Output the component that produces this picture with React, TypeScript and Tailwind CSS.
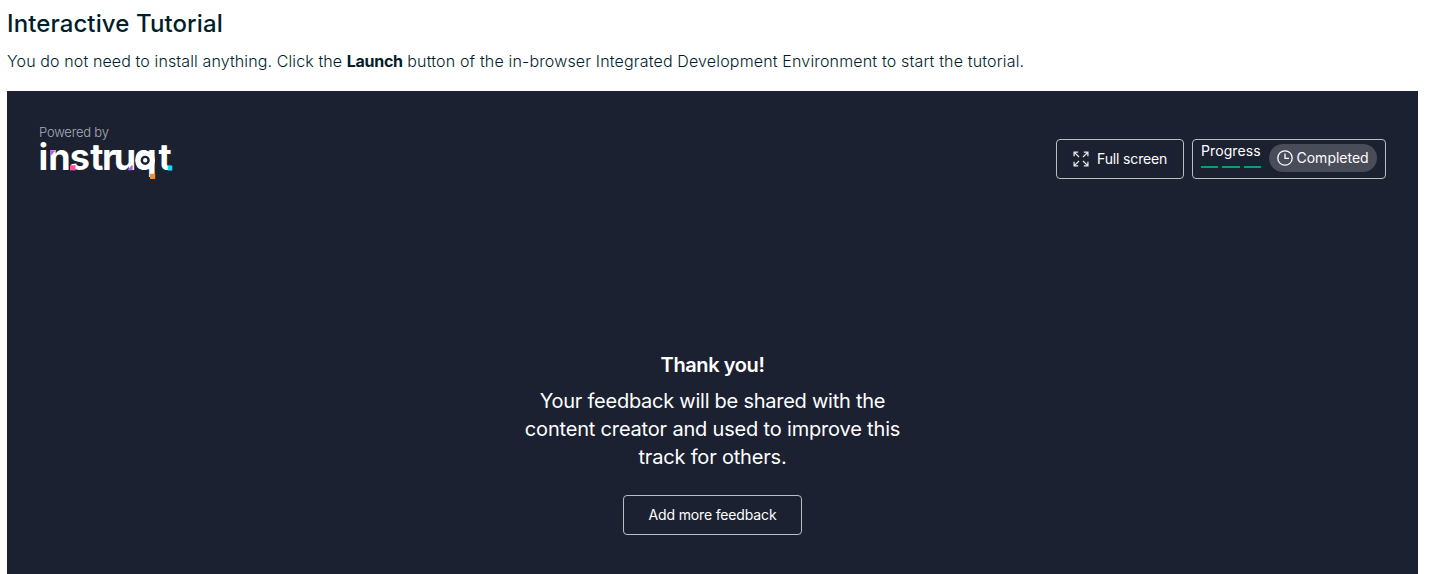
import React from "react";

function InstruqtLogo() {
  return (
    <svg width="134" height="40" viewBox="39 141 134 40" className="block overflow-visible" aria-label="instruqt">
      <text
        x="38.6 48.2 69.7 90.2 101.9 113.8 133.9 158.4"
        y="170.3"
        fill="#ffffff"
        className="font-['Inter',sans-serif] text-[36px] font-bold"
      >
        instruqt
      </text>
      <path d="M50 150.2H54.8V151.2L51.6 155H50Z" fill="#a46bf5" />
      <path d="M132.7 170.2H127.6L131.6 165.2H132.7Z" fill="#a46bf5" />
      <rect x="70" y="165.2" width="5.5" height="5.2" fill="#ff4fa3" />
      <circle cx="145.2" cy="160.3" r="9.8" fill="#ffffff" />
      <circle cx="145.2" cy="160.3" r="3.4" fill="#ffffff" stroke="#1b2130" strokeWidth="2.4" />
      <rect x="150" y="173.8" width="5.2" height="5.2" fill="#ff8a1f" />
      <rect x="167.7" y="165.6" width="4.6" height="5" fill="#00e0ff" />
    </svg>
  );
}

function ExpandIcon() {
  return (
    <svg width="16" height="16" viewBox="0 0 16 16" fill="none" stroke="#e4e5e8" strokeWidth="1.3" className="block">
      <path d="M1.1 5.2V1.1H5.2M1.1 1.1L6 6M10.8 1.1H14.9V5.2M14.9 1.1L10 6M1.1 10.8V14.9H5.2M1.1 14.9L6 10M10.8 14.9H14.9V10.8M14.9 14.9L10 10" />
    </svg>
  );
}

function ClockIcon() {
  return (
    <svg width="16" height="16" viewBox="0 0 16 16" fill="none" stroke="#ffffff" strokeWidth="1.3" className="block shrink-0">
      <circle cx="8" cy="8" r="7.2" />
      <path d="M8 3.5V8.4H12" />
    </svg>
  );
}

export default function App() {
  return (
    <div className="flex h-[574px] w-[1447px] flex-col overflow-hidden bg-white pl-[7px] font-['Inter',sans-serif] text-[#001e2b]">
      <h1 className="mt-2 h-8 text-2xl leading-8 font-medium tracking-[0.1px] whitespace-nowrap">Interactive Tutorial</h1>
      <p className="mt-[7px] h-7 text-base leading-7 font-light whitespace-nowrap">
        <span className="tracking-[0.115px]">You do not need to install anything. Click the </span>
        <strong className="font-bold tracking-[-0.3px]">Launch</strong>
        <span className="tracking-[0.16px]"> button of the in-browser Integrated Development Environment to start the tutorial.</span>
      </p>

      <section className="mt-4 flex w-[1411px] flex-1 flex-col bg-[#1b2130] text-white">
        <header className="flex items-start justify-between pr-8 pl-8">
          <div className="pt-[33px]">
            <div className="h-[17px] text-[13px] leading-[17px] font-light tracking-[-0.2px] text-[#a9aebb]">Powered by</div>
            <InstruqtLogo />
          </div>
          <div className="flex gap-2 pt-12 text-sm">
            <button className="flex h-10 w-32 items-center gap-2 rounded border border-[#bbbdc1] pl-4 tracking-[-0.15px] whitespace-nowrap">
              <ExpandIcon />
              Full screen
            </button>
            <div className="flex h-10 w-[194px] rounded border border-[#bbbdc1] pt-1 pl-2">
              <div className="w-[60px]">
                <div className="h-4 leading-[14px] tracking-[0.1px]">Progress</div>
                <div className="mt-[6px] flex gap-1">
                  <i className="h-0.5 flex-1 bg-[#109c71]" />
                  <i className="h-0.5 flex-1 bg-[#109c71]" />
                  <i className="h-0.5 flex-1 bg-[#109c71]" />
                </div>
              </div>
              <div className="ml-2 flex h-7 w-[108px] items-center gap-[3.5px] rounded-full bg-[#494d59] pl-2">
                <ClockIcon />
                Completed
              </div>
            </div>
          </div>
        </header>

        <div className="mt-[170px] flex flex-col items-center text-center text-xl leading-7 tracking-[-0.25px]">
          <h2 className="font-semibold tracking-[-0.4px]">Thank you!</h2>
          <p className="mt-2 w-[384px]">
            Your feedback will be shared with the
            <br />
            <span className="tracking-[-0.18px]">content creator and used to improve this</span>
            <br />
            <span className="tracking-[-0.18px]">track for others.</span>
          </p>
          <button className="mt-6 h-10 w-[179px] rounded border border-[#bbbdc1] text-sm tracking-[-0.15px]">Add more feedback</button>
        </div>
      </section>
    </div>
  );
}
